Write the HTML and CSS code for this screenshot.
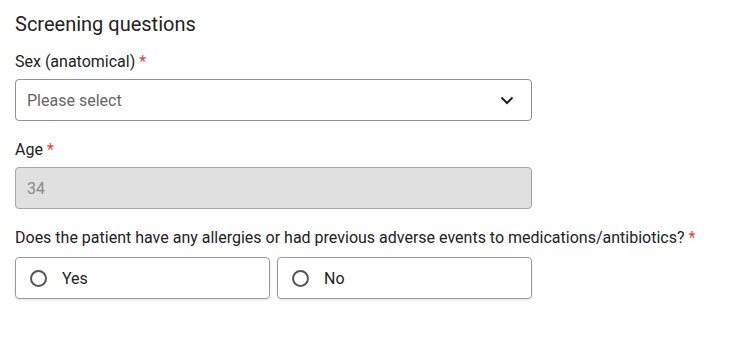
FILE: index.html
```html
<!DOCTYPE html>
<html lang="en">
<head>
<meta charset="utf-8">
<link rel="stylesheet" href="styles.css">
</head>
<body>
<form class="form">
  <h2 class="title">Screening questions</h2>

  <div class="field">
    <label class="label">Sex (anatomical) <span class="req">*</span></label>
    <div class="select">
      <span class="placeholder">Please select</span>
      <svg class="chevron" width="14" height="9" viewBox="0 0 14 9"><path d="M1.5 1.5 L7 7 L12.5 1.5" fill="none" stroke="#222" stroke-width="2"/></svg>
    </div>
  </div>

  <div class="field">
    <label class="label">Age <span class="req">*</span></label>
    <div class="input disabled">34</div>
  </div>

  <div class="field">
    <label class="label label-question">Does the patient have any allergies or had previous adverse events to medications/antibiotics? <span class="req">*</span></label>
    <div class="radios">
      <div class="radio"><span class="circle"></span><span>Yes</span></div>
      <div class="radio"><span class="circle"></span><span>No</span></div>
    </div>
  </div>
</form>
</body>
</html>
```

FILE: styles.css
```css
html, body {
  margin: 0;
  padding: 0;
  background: #fff;
}
body {
  font-family: Roboto, "Liberation Sans", Arial, sans-serif;
  color: #212121;
}
.form {
  padding: 11px 15px;
}
.title {
  margin: 0 0 14px;
  font-size: 20px;
  font-weight: 400;
  line-height: 26px;
  color: #222;
}
.field {
  margin-bottom: 18px;
}
.label {
  display: block;
  font-size: 16px;
  line-height: 22px;
  margin-bottom: 6px;
  color: #222;
  white-space: nowrap;
}
.label-question {
  margin-bottom: 8px;
}
.req {
  color: #e53e3e;
}
.select, .input, .radios {
  width: 517px;
}
.select, .input {
  box-sizing: border-box;
  height: 42px;
  border: 1px solid #8f8f8f;
  border-radius: 4px;
  display: flex;
  align-items: center;
  padding: 0 11px;
  font-size: 16px;
}
.select {
  justify-content: space-between;
  padding-right: 17px;
}
.placeholder {
  color: #666;
}
.input.disabled {
  background: #e0e0e0;
  color: #8a8a8a;
  border-color: #a6a6a6;
}
.radios {
  display: grid;
  grid-template-columns: 1fr 1fr;
  gap: 7px;
}
.radio {
  box-sizing: border-box;
  height: 42px;
  border: 1px solid #9a9a9a;
  border-radius: 4px;
  display: flex;
  align-items: center;
  padding: 0 14px;
  gap: 15px;
  font-size: 16px;
  color: #222;
  box-shadow: 0 1px 3px rgba(0,0,0,0.12);
}
.circle {
  box-sizing: border-box;
  width: 17px;
  height: 17px;
  border: 2px solid #555;
  border-radius: 50%;
}
```
